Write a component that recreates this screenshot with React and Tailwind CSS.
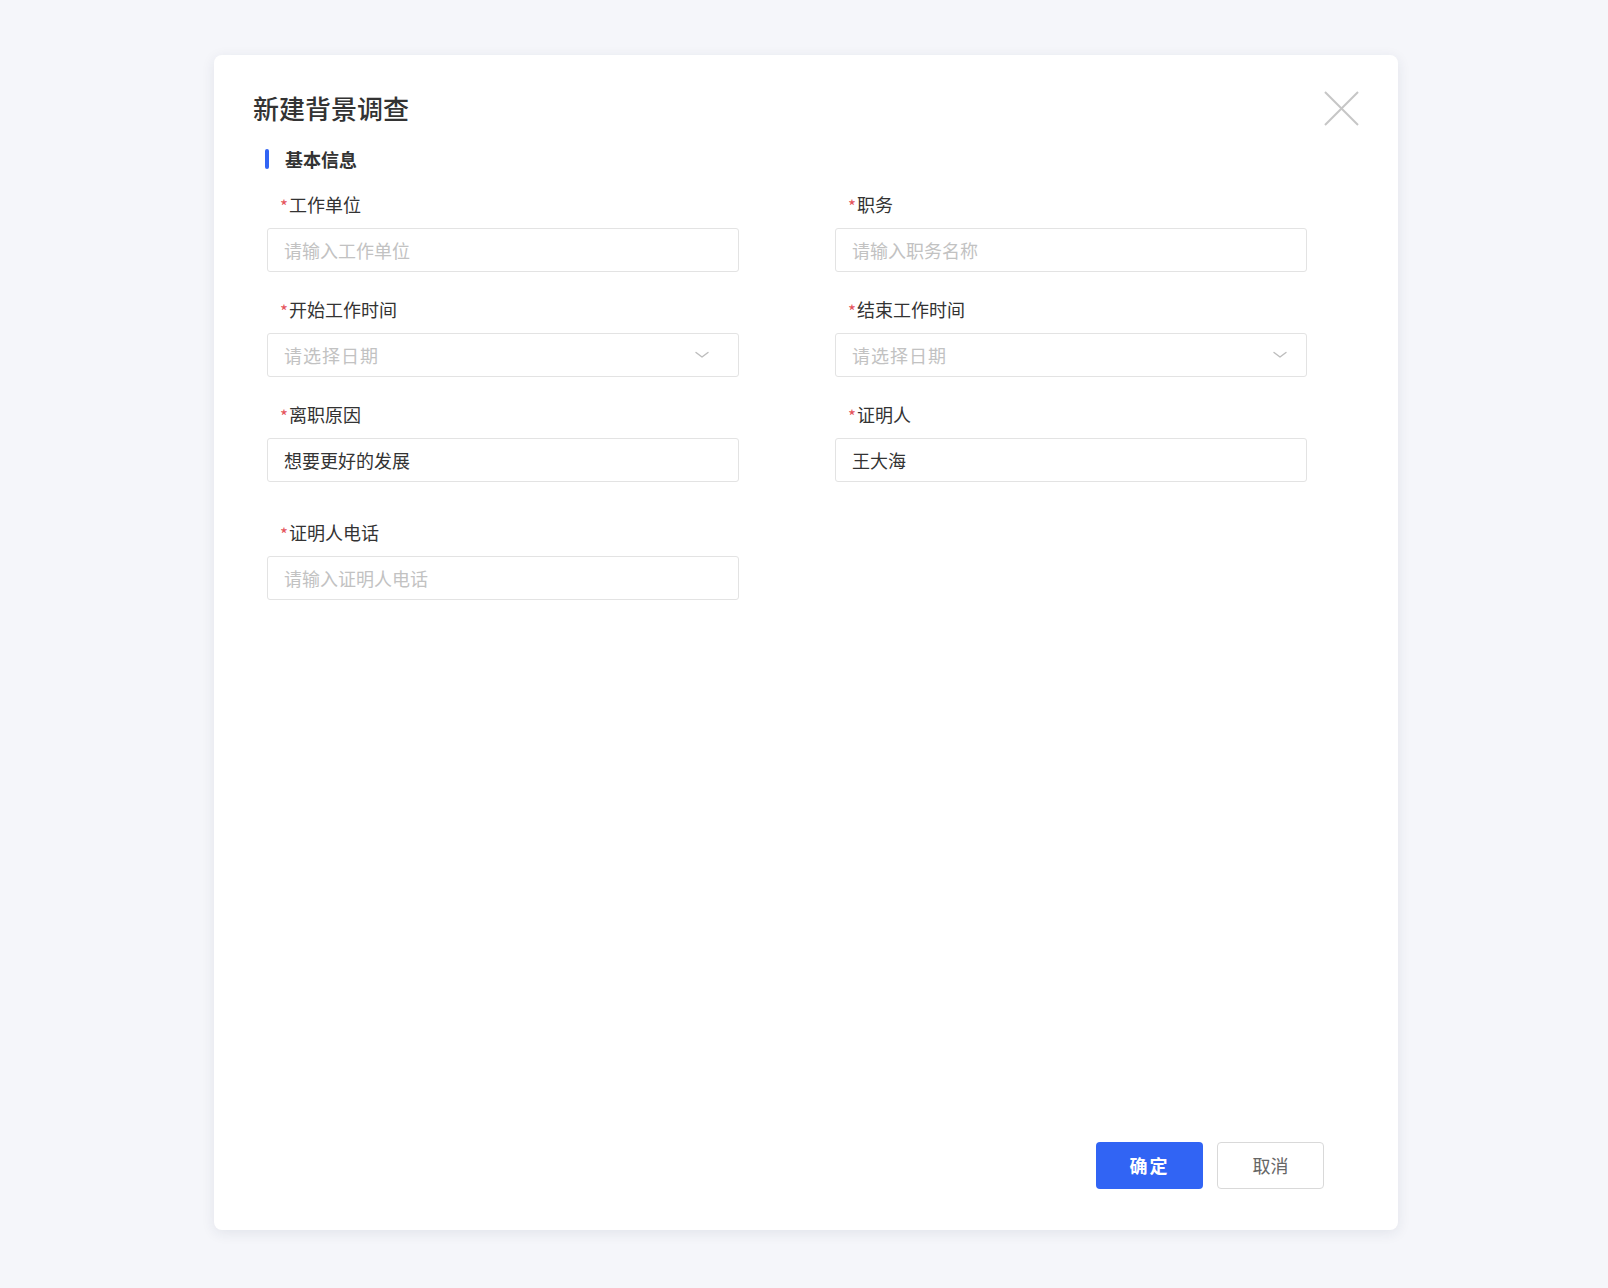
import React from 'react';

const fields = [
  { label: '工作单位', placeholder: '请输入工作单位' },
  { label: '职务', placeholder: '请输入职务名称' },
  { label: '开始工作时间', placeholder: '请选择日期', select: true, pr: 'pr-[29px]' },
  { label: '结束工作时间', placeholder: '请选择日期', select: true, pr: 'pr-[19px]' },
  { label: '离职原因', value: '想要更好的发展' },
  { label: '证明人', value: '王大海' },
  { label: '证明人电话', placeholder: '请输入证明人电话', extra: true },
];

const Chevron = () => (
  <svg width="14" height="8" viewBox="0 0 14 8" fill="none">
    <path d="M1 1.5 L7 6 L13 1.5" stroke="#bdbdbd" strokeWidth="1.4" strokeLinecap="round" strokeLinejoin="round" />
  </svg>
);

const Field = ({ field }) => (
  <div className={field.extra ? 'mt-[13px]' : ''}>
    <div className="flex h-6 items-center pl-[13px] text-[18px] leading-6 text-[#333]">
      <span className="mt-[3px] mr-[1px] text-[17px] leading-none text-[#e5535c]">*</span>
      {field.label}
    </div>
    <div
      className={`mt-[12px] flex h-[44px] items-center justify-between rounded-[3px] border border-[#e3e3e3] bg-white pl-4 ${field.pr || 'pr-6'}`}
    >
      {field.value ? (
        <span className="text-[18px] text-[#333]">{field.value}</span>
      ) : (
        <span className={`text-[18px] text-[#c2c2c2] ${field.select ? 'tracking-[1px]' : ''}`}>
          {field.placeholder}
        </span>
      )}
      {field.select && <Chevron />}
    </div>
  </div>
);

export default function App() {
  return (
    <div
      className="min-h-[1288px] bg-[#f5f6fa] pt-[55px]"
      style={{ fontFamily: '"Noto Sans CJK SC", "Noto Sans", sans-serif' }}
    >
      <div className="relative ml-[214px] flex h-[1175px] w-[1184px] flex-col rounded-lg bg-white px-[39px] pt-[35px] pb-[41px] shadow-[0_3px_14px_rgba(30,40,80,0.09)]">
        <button className="absolute top-[36px] right-[39px] flex h-[35px] w-[35px] items-center justify-center">
          <svg width="35" height="35" viewBox="0 0 35 35" fill="none">
            <path d="M1 1 L34 34 M34 1 L1 34" stroke="#c6c6c6" strokeWidth="2" />
          </svg>
        </button>

        <h1 className="text-[26px] leading-9 font-medium text-[#333]">新建背景调查</h1>

        <div className="mt-[21px] flex h-6 items-center pl-3">
          <span className="h-5 w-1 rounded-sm bg-[#3164f4]" />
          <span className="ml-4 text-[18px] font-bold text-[#333]">基本信息</span>
        </div>

        <div className="mt-[21px] grid grid-cols-[472px_472px] gap-x-[96px] gap-y-[25px] pl-[14px]">
          {fields.map((f) => (
            <Field key={f.label} field={f} />
          ))}
        </div>

        <div className="flex-1" />

        <div className="flex justify-end gap-[14px] pr-[35px]">
          <button className="h-[47px] w-[107px] rounded-[4px] bg-[#3164f4] text-[18px] font-bold tracking-[2px] text-white">
            确定
          </button>
          <button className="h-[47px] w-[107px] rounded-[4px] border border-[#d9d9d9] bg-white text-[18px] text-[#666]">
            取消
          </button>
        </div>
      </div>
    </div>
  );
}
